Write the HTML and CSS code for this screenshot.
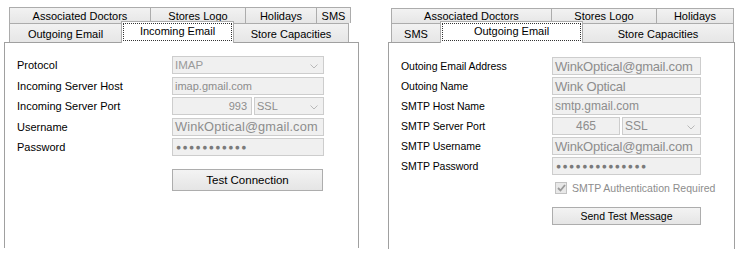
FILE: index.html
```html
<!DOCTYPE html>
<html>
<head>
<meta charset="utf-8">
<link rel="stylesheet" href="styles.css">
</head>
<body>
<div class="page">
  <div class="widget w-left">
    <div class="tabs">
      <div class="tabrow r1">
        <div class="tab l1a">Associated Doctors</div>
        <div class="tab l1b">Stores Logo</div>
        <div class="tab l1c">Holidays</div>
        <div class="tab l1d">SMS</div>
      </div>
      <div class="tabrow r2">
        <div class="tab l2a">Outgoing Email</div>
        <div class="tab sel l2b"><span class="focus">Incoming Email</span></div>
        <div class="tab l2c">Store Capacities</div>
      </div>
    </div>
    <div class="pane">
      <div class="form">
        <div class="lbl">Protocol</div>
        <div class="field combo imap">IMAP<svg class="arrow" width="8" height="5" viewBox="0 0 8 5"><polyline points="0.5,0.5 4,4 7.5,0.5" fill="none" stroke="#b8b8b8" stroke-width="1"/></svg></div>
        <div class="lbl">Incoming Server Host</div>
        <div class="field small">imap.gmail.com</div>
        <div class="lbl">Incoming Server Port</div>
        <div class="pair">
          <div class="field num right">993</div>
          <div class="field combo ssl">SSL<svg class="arrow" width="8" height="5" viewBox="0 0 8 5"><polyline points="0.5,0.5 4,4 7.5,0.5" fill="none" stroke="#b8b8b8" stroke-width="1"/></svg></div>
        </div>
        <div class="lbl">Username</div>
        <div class="field big">WinkOptical@gmail.com</div>
        <div class="lbl">Password</div>
        <div class="field dots">●●●●●●●●●●●</div>
      </div>
      <div class="btn btn-left">Test Connection</div>
    </div>
  </div>

  <div class="widget w-right">
    <div class="tabs">
      <div class="tabrow r1">
        <div class="tab r1a">Associated Doctors</div>
        <div class="tab r1b">Stores Logo</div>
        <div class="tab r1c">Holidays</div>
      </div>
      <div class="tabrow r2">
        <div class="tab r2a">SMS</div>
        <div class="tab sel r2b"><span class="focus">Outgoing Email</span></div>
        <div class="tab r2c">Store Capacities</div>
      </div>
    </div>
    <div class="pane">
      <div class="form">
        <div class="lbl">Outoing Email Address</div>
        <div class="field arial">WinkOptical@gmail.com</div>
        <div class="lbl">Outoing Name</div>
        <div class="field arial">Wink Optical</div>
        <div class="lbl">SMTP Host Name</div>
        <div class="field arial sm">smtp.gmail.com</div>
        <div class="lbl">SMTP Server Port</div>
        <div class="pair">
          <div class="field num center arial sm">465</div>
          <div class="field combo ssl arial sm">SSL<svg class="arrow" width="8" height="5" viewBox="0 0 8 5"><polyline points="0.5,0.5 4,4 7.5,0.5" fill="none" stroke="#b8b8b8" stroke-width="1"/></svg></div>
        </div>
        <div class="lbl">SMTP Username</div>
        <div class="field arial">WinkOptical@gmail.com</div>
        <div class="lbl">SMTP Password</div>
        <div class="field dots">●●●●●●●●●●●●●●</div>
      </div>
      <div class="check-row">
        <span class="checkbox"><svg width="9" height="8" viewBox="0 0 9 8"><polyline points="1,4 3.5,6.5 8,1" fill="none" stroke="#9a9a9a" stroke-width="1.8"/></svg></span>
        <span class="check-label">SMTP Authentication Required</span>
      </div>
      <div class="btn btn-right">Send Test Message</div>
    </div>
  </div>
</div>
</body>
</html>
```

FILE: styles.css
```css
* { box-sizing: border-box; }
html, body { margin: 0; padding: 0; background: #fff; }
body {
  width: 744px;
  height: 259px;
  overflow: hidden;
  font-family: "Liberation Sans", Arial, sans-serif;
  font-size: 11px;
  color: #000;
}
.page {
  display: flex;
  padding: 7px 0 0 4px;
}
.widget { display: flex; flex-direction: column; }
.w-left { width: 355px; }
.w-right { width: 347px; margin-left: 29px; }

.tabs { display: flex; flex-direction: column; }
.w-left .tabs { padding-left: 5px; }
.w-right .tabs { padding-left: 3px; padding-top: 1px; }

.tabrow { display: flex; }
.tabrow.r1 { height: 16px; }
.tabrow.r2 { height: 19px; }
.w-right .tabrow.r1 { height: 15px; }

.tab {
  flex: none;
  display: flex;
  align-items: center;
  justify-content: center;
  border: 1px solid #acacac;
  border-bottom: none;
  margin-left: -1px;
  background: linear-gradient(#f2f2f2, #e6e6e6);
  white-space: nowrap;
  line-height: 1;
  padding-top: 1px;
}
.tab:first-child { margin-left: 0; }
.r2 .tab { padding-top: 3px; }
.tab.sel {
  position: relative;
  z-index: 1;
  background: #fff;
  margin-top: -2px;
  margin-bottom: -1px;
  padding: 1px;
  align-items: stretch;
}
.focus {
  flex: 1;
  display: flex;
  justify-content: center;
  padding-top: 2px;
  border: 1px dotted #333;
  margin-bottom: 1px;
}

/* left tab widths */
.l1a { width: 142px; }
.l1b { width: 96px; }
.l1c { width: 72px; }
.l1d { width: 35px; }
.l2a { width: 113px; }
.l2b { width: 113px; }
.l2c { width: 116px; }

/* right tab widths */
.r1a { width: 161px; }
.r1b { width: 106px; }
.r1c { width: 78px; }
.r2a { width: 50px; }
.r2b { width: 143px; }
.r2c { width: 152px; }

.pane {
  height: 206px;
  border: 1px solid #a0a0a0;
  border-bottom: none;
  background: #fff;
}
.w-left .pane { padding: 13px 0 0 12px; }
.w-right .pane { padding: 14px 0 0 12px; height: 207px; }

.form {
  display: grid;
  align-items: center;
}
.w-left .form {
  grid-template-columns: 155px 152px;
  grid-auto-rows: 18px;
  row-gap: 2.5px;
}
.w-right .form {
  grid-template-columns: 151px 149px;
  grid-auto-rows: 18px;
  row-gap: 2px;
}
.lbl { white-space: nowrap; }
.w-right .lbl { font-size: 10.5px; letter-spacing: -0.05px; }

.field {
  height: 18px;
  display: flex;
  align-items: center;
  border: 1px solid #cdcdcd;
  background: #f0f0f0;
  color: #8d8d8d;
  padding: 0 2px;
  white-space: nowrap;
  overflow: hidden;
  position: relative;
}
.field.small { font-size: 11px; }
.field.big { font-size: 12.8px; letter-spacing: 0.15px; }
.field.arial { font-size: 13px; letter-spacing: -0.2px; }
.field.arial.sm { font-size: 12px; letter-spacing: 0; }
.field.imap { font-size: 11.5px; color: #9a9a9a; }
.field.dots { font-size: 8.5px; letter-spacing: 1.4px; color: #7a7a7a; padding-left: 3px; }

.combo { justify-content: flex-start; }
.arrow { position: absolute; right: 5px; top: 7px; }

.pair { display: flex; gap: 2px; height: 18px; }
.w-left .num { width: 80px; }
.w-left .ssl { width: 70px; }
.w-right .num { width: 68px; }
.w-right .ssl { width: 79px; }
.right { justify-content: flex-end; padding-right: 4px; }
.center { justify-content: center; }

.btn {
  display: flex;
  align-items: center;
  justify-content: center;
  border: 1px solid #adadad;
  background: linear-gradient(#f3f3f3, #e5e5e5);
  color: #000;
}
.btn-left { width: 151px; height: 22px; margin: 13px 0 0 155px; font-size: 11.5px; }
.btn-right { width: 149px; height: 18px; margin: 13px 0 0 151px; font-size: 10.5px; }

.check-row {
  display: flex;
  align-items: center;
  height: 12px;
  margin: 7px 0 0 154px;
}
.checkbox {
  width: 12px;
  height: 12px;
  border: 1px solid #c2c2c2;
  background: #e8e8e8;
  display: flex;
  align-items: center;
  justify-content: center;
}
.check-label {
  margin-left: 5px;
  color: #8d8d8d;
  font-size: 10.5px;
  white-space: nowrap;
}
```
